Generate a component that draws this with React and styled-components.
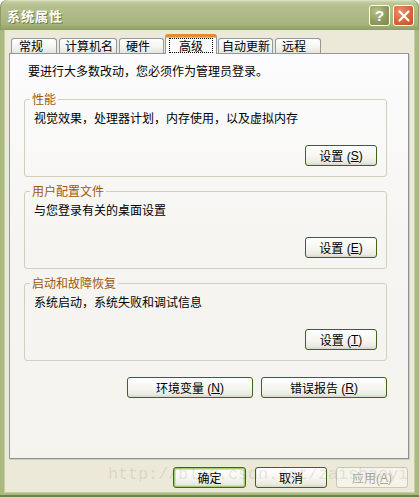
import React from "react";
import styled, { createGlobalStyle, css } from "styled-components";

const GlobalStyle = createGlobalStyle`
  html, body {
    margin: 0;
    padding: 0;
    background: #ffffff;
  }
  body {
    font-family: "Liberation Sans", "Noto Sans CJK SC", sans-serif;
    font-size: 12px;
    color: #000;
  }
`;

const tabs = [
  { label: "常规", width: 46, pad: 7 },
  { label: "计算机名", width: 58, pad: 5 },
  { label: "硬件", width: 45, pad: 6 },
  { label: "高级", width: 52, active: true },
  { label: "自动更新", width: 55, pad: 3 },
  { label: "远程", width: 46, pad: 6 },
];

const groups = [
  { title: "性能", desc: "视觉效果，处理器计划，内存使用，以及虚拟内存", key: "S" },
  { title: "用户配置文件", desc: "与您登录有关的桌面设置", key: "E" },
  { title: "启动和故障恢复", desc: "系统启动，系统失败和调试信息", key: "T" },
];

function App() {
  return (
    <>
      <GlobalStyle />
      <Window>
        <TitleBar>
          <Title>系统属性</Title>
          <Caption>
            <CapButton kind="help">?</CapButton>
            <CapButton kind="close">
              <svg width="12" height="12" viewBox="0 0 12 12">
                <path d="M1.5 1.5 L10.5 10.5 M10.5 1.5 L1.5 10.5" stroke="#fff" strokeWidth="2.2" strokeLinecap="round" />
              </svg>
            </CapButton>
          </Caption>
        </TitleBar>

        <Frame>
          <TabStrip>
            {tabs.map((t) => (
              <Tab key={t.label} width={t.width} pad={t.pad} active={t.active}>
                {t.active ? <Focus>{t.label}</Focus> : t.label}
              </Tab>
            ))}
          </TabStrip>

          <Panel>
            <Intro>要进行大多数改动，您必须作为管理员登录。</Intro>

            {groups.map((g) => (
              <Group key={g.title}>
                <Legend>{g.title}</Legend>
                <Desc>{g.desc}</Desc>
                <GroupActions>
                  <Button width={72}>
                    设置 (<u>{g.key}</u>)
                  </Button>
                </GroupActions>
              </Group>
            ))}

            <PanelActions>
              <Button width={126}>
                环境变量 (<u>N</u>)
              </Button>
              <Button width={126}>
                错误报告 (<u>R</u>)
              </Button>
            </PanelActions>
          </Panel>

          <DialogActions>
            <Button width={73} primary>
              确定
            </Button>
            <Button width={72}>取消</Button>
            <Button width={72} disabled>
              应用(<u>A</u>)
            </Button>
          </DialogActions>

          <Watermark>http://blog.csdn.net/zaishaoyi</Watermark>
        </Frame>
      </Window>
    </>
  );
}

export default App;

const Window = styled.div`
  width: 419px;
  height: 497px;
  display: flex;
  flex-direction: column;
  overflow: hidden;
`;

const TitleBar = styled.div`
  height: 30px;
  flex: none;
  display: flex;
  align-items: center;
  justify-content: space-between;
  padding: 0 5px 0 7px;
  border-radius: 7px 7px 0 0;
  background: linear-gradient(
    to bottom,
    #dfe6c6 0px,
    #c3cda0 2px,
    #b5c18f 5px,
    #afbb88 14px,
    #a7b47d 24px,
    #98a76c 28px,
    #8d9d60 30px
  );
  box-shadow: inset 1px 0 0 #8e9d64, inset -1px 0 0 #8e9d64;
`;

const Title = styled.div`
  color: #ffffff;
  font-family: "Noto Sans CJK SC", sans-serif;
  font-weight: bold;
  font-size: 13px;
  letter-spacing: 1px;
  text-shadow: 1px 1px 0 #6d7a47;
`;

const Caption = styled.div`
  display: flex;
  gap: 3px;
  margin-top: 1px;
`;

const CapButton = styled.div`
  width: 21px;
  height: 21px;
  box-sizing: border-box;
  border: 1px solid #ffffff;
  border-radius: 3px;
  display: flex;
  align-items: center;
  justify-content: center;
  color: #fff;
  font-family: "Liberation Sans", sans-serif;
  font-weight: bold;
  font-size: 15px;
  ${({ kind }) =>
    kind === "close"
      ? css`
          background: radial-gradient(circle at 35% 30%, #e99172 0%, #d9643d 55%, #c44e28 100%);
        `
      : css`
          background: radial-gradient(circle at 35% 30%, #b8c28f 0%, #8e9b60 55%, #7a884d 100%);
        `}
`;

const Frame = styled.div`
  flex: 1;
  position: relative;
  display: flex;
  flex-direction: column;
  background: #ece9d8;
  border-left: 4px solid #a9b980;
  border-right: 4px solid #a9b980;
  border-bottom: 4px solid #a9b980;
  box-shadow: inset 1px 0 0 #c5d1a3, inset -1px 0 0 #c5d1a3, inset 0 -1px 0 #c5d1a3;
  padding: 4px 6px 5px 5px;
  &::after {
    content: "";
    position: absolute;
    left: -4px;
    right: -4px;
    bottom: -4px;
    height: 2px;
    background: #6f8247;
  }
`;

const TabStrip = styled.div`
  height: 19px;
  display: flex;
  align-items: flex-start;
  gap: 2px;
  padding-left: 2px;
  position: relative;
  z-index: 1;
`;

const Tab = styled.div`
  box-sizing: border-box;
  width: ${({ width }) => width}px;
  height: 15px;
  margin-top: 4px;
  padding: 0 0 0 ${({ pad }) => pad || 6}px;
  overflow: hidden;
  font-family: "Noto Sans CJK SC", sans-serif;
  font-size: 12px;
  line-height: 14px;
  white-space: nowrap;
  border: 1px solid #919b9c;
  border-bottom: none;
  border-radius: 3px 3px 0 0;
  background: linear-gradient(to bottom, #ffffff, #f3f3ef 60%, #e5e4dc);
  ${({ active }) =>
    active &&
    css`
      height: 20px;
      margin: 0 -1px;
      padding: 1px 3px 0 3px;
      background: #fcfcfe;
      border-top: 3px solid #e68b2c;
      box-shadow: inset 0 1px 0 #ffc73c;
    `}
`;

const Focus = styled.div`
  height: 15px;
  line-height: 13px;
  box-sizing: border-box;
  text-align: center;
  border: 1px dotted #000;
`;

const Panel = styled.div`
  box-sizing: border-box;
  width: 400px;
  height: 406px;
  border: 1px solid #919b9c;
  border-right-color: #8a9294;
  border-bottom-color: #8a9294;
  box-shadow: 1px 1px 0 #d0cec3;
  background: linear-gradient(to bottom, #fcfcfe 0%, #f6f5f1 45%, #f4f3ee 100%);
  padding: 10px 21px 0 14px;
`;

const Intro = styled.div`
  font-family: "Noto Sans CJK SC", sans-serif;
  line-height: 14px;
  margin: 0 0 14px 4px;
`;

const Group = styled.fieldset`
  box-sizing: border-box;
  width: 363px;
  margin: 0 0 7px 0;
  min-inline-size: 0;
  padding: 5px 9px 10px 9px;
  border: 1px solid #d0d0bf;
  border-radius: 3px;
`;

const Legend = styled.legend`
  font-family: "Noto Sans CJK SC", sans-serif;
  color: #a0580a;
  line-height: 14px;
  padding: 0 2px;
  margin-left: -4px;
`;

const Desc = styled.div`
  font-family: "Noto Sans CJK SC", sans-serif;
  line-height: 14px;
`;

const GroupActions = styled.div`
  display: flex;
  justify-content: flex-end;
  margin-top: 20px;
`;

const PanelActions = styled.div`
  width: 363px;
  display: flex;
  justify-content: flex-end;
  gap: 8px;
  margin-top: 16px;
`;

const DialogActions = styled.div`
  display: flex;
  justify-content: flex-end;
  gap: 9px;
  margin-top: 8px;
  padding-right: 1px;
`;

const Button = styled.div`
  box-sizing: border-box;
  width: ${({ width }) => width}px;
  height: 21px;
  display: flex;
  align-items: center;
  justify-content: center;
  font-family: "Liberation Sans", "Noto Sans CJK SC", sans-serif;
  font-size: 12px;
  border: 1px solid #3e6517;
  border-radius: 3px;
  background: linear-gradient(to bottom, #ffffff 0%, #f7f6f0 50%, #ecebe3 85%, #d8d6c8 100%);
  u {
    text-underline-offset: 1px;
  }
  ${({ primary }) =>
    primary &&
    css`
      box-shadow: inset 0 0 0 1px #a6c97a, inset 0 0 0 2px #cfe3b1;
    `}
  ${({ disabled }) =>
    disabled &&
    css`
      border-color: #c9c7ba;
      color: #aca899;
      background: #f5f4ea;
    `}
`;

const Watermark = styled.div`
  position: absolute;
  left: 104px;
  bottom: 8px;
  font-family: "Liberation Mono", monospace;
  font-size: 17px;
  letter-spacing: -0.2px;
  line-height: 20px;
  color: rgba(90, 90, 70, 0.14);
  pointer-events: none;
  white-space: nowrap;
`;
